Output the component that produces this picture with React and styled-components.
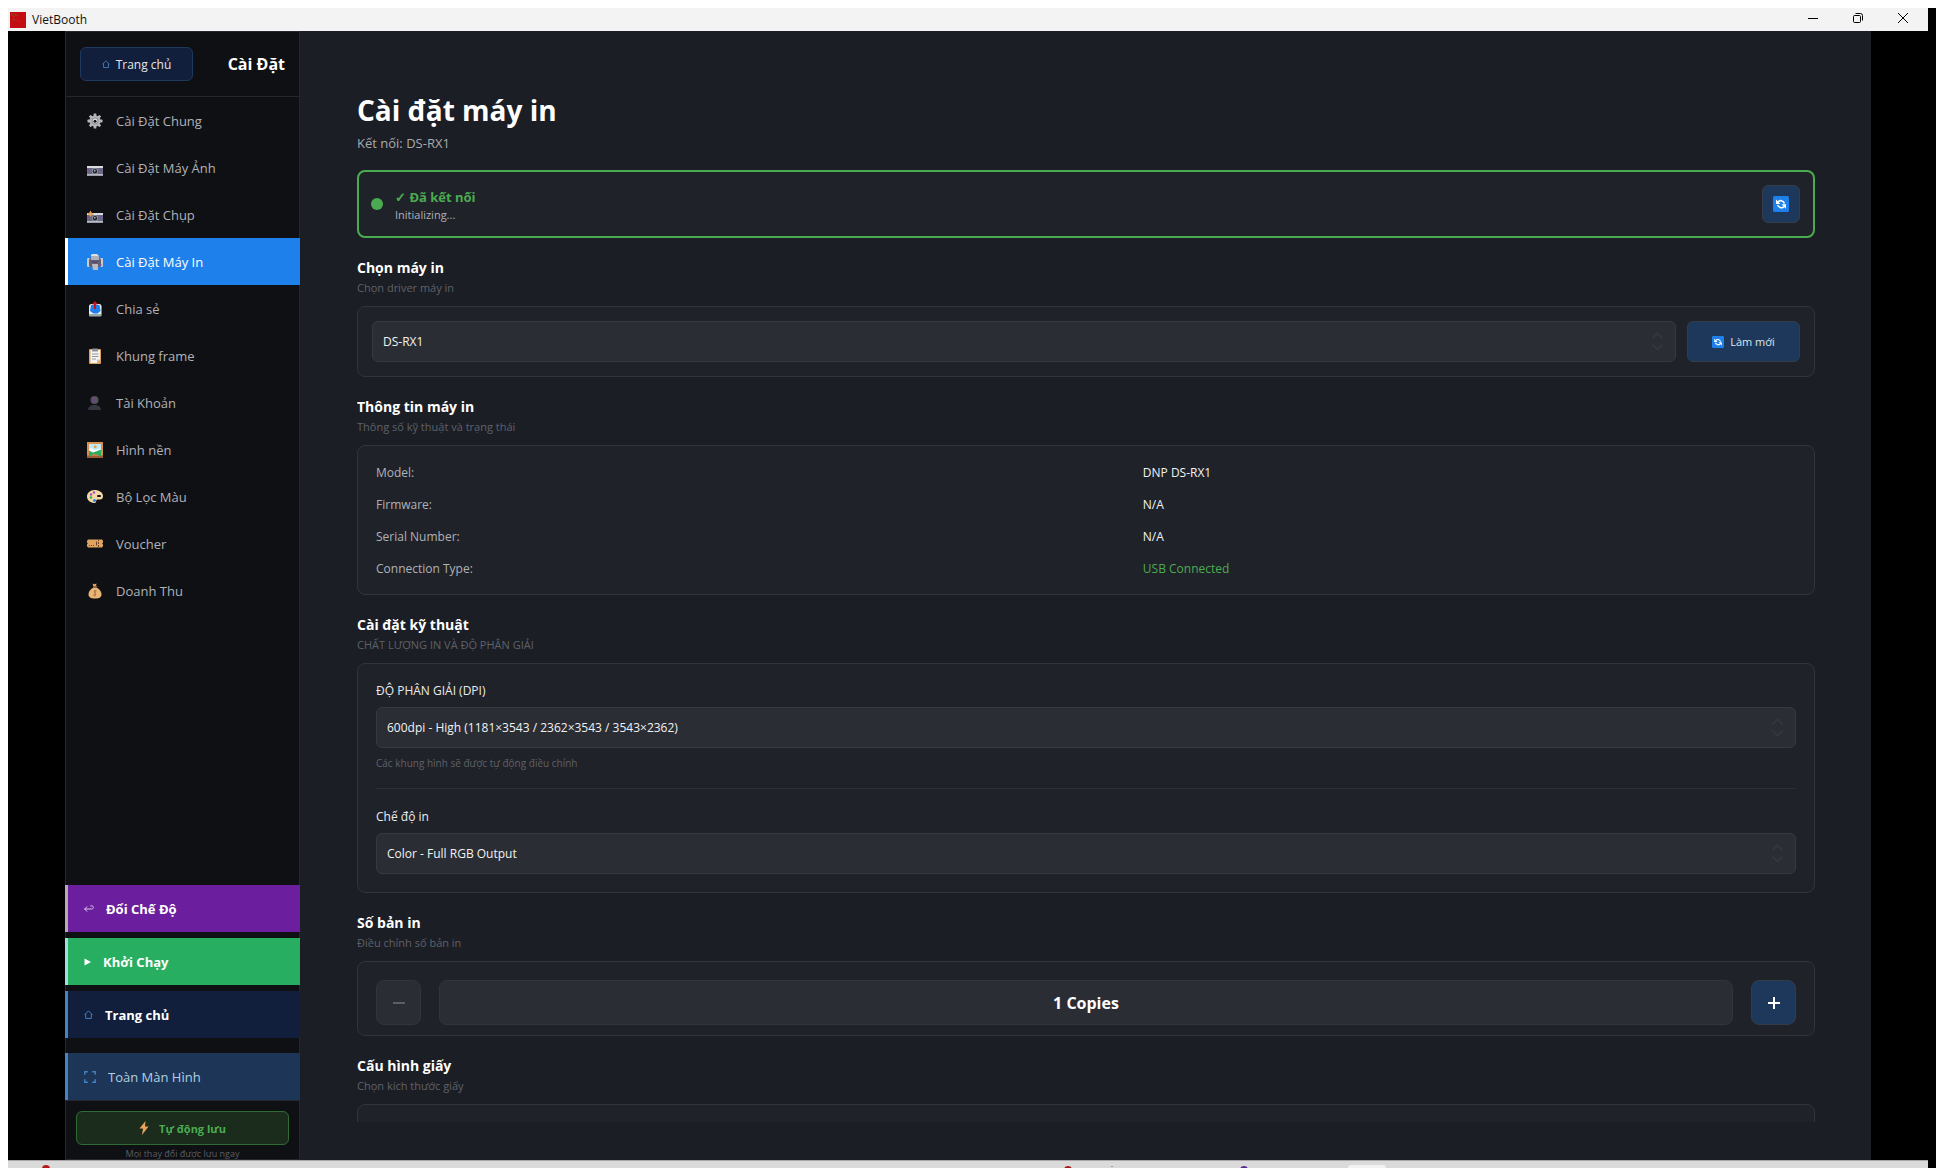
import React, { useState } from 'react';
import styled, { createGlobalStyle } from 'styled-components';

const GlobalStyle = createGlobalStyle`
  * {
    box-sizing: border-box;
  }
  body {
    margin: 0;
    background: #fff;
    color: #fff;
    font-family: 'Open Sans', 'Noto Sans', sans-serif;
    font-size: 12px;
    overflow: hidden;
  }
  button,
  select {
    font: inherit;
    margin: 0;
  }
  h1,
  h2,
  p,
  dl,
  dd {
    margin: 0;
  }
`;

/* ---------- window ---------- */

const Desktop = styled.div`
  display: grid;
  grid-template-columns: 8px 1fr 8px;
  height: 100vh;
  padding-top: 8px;
`;

const RightEdge = styled.div`
  grid-column: 3;
  background: #000;
`;

const Window = styled.div`
  grid-column: 2;
  display: flex;
  flex-direction: column;
  min-width: 0;
  min-height: 0;
`;

const TitleBar = styled.header`
  display: flex;
  align-items: center;
  flex: none;
  height: 23px;
  padding: 0 3px 0 2px;
  background: #f3f3f3;
  color: #111;
`;

const AppIcon = styled.svg`
  width: 16px;
  height: 16px;
  margin-right: 6px;
`;

const WindowButtons = styled.div`
  display: flex;
  height: 100%;
  margin-left: auto;
`;

const WindowButton = styled.button`
  display: flex;
  justify-content: center;
  width: 45px;
  height: 100%;
  padding: 4px 0 0;
  border: 0;
  background: none;

  svg {
    width: 12px;
    height: 12px;
    fill: none;
    stroke: #000;
  }
`;

const Stage = styled.div`
  display: flex;
  flex: 1;
  min-height: 0;
  padding: 0 57px;
  background: #000;
`;

const Taskbar = styled.footer`
  flex: none;
  height: 8px;
  border-top: 1px solid #aaa5aa;
  background: #dadada;
  overflow: hidden;

  svg {
    display: block;
    width: 100%;
    height: 7px;
  }
`;

/* ---------- sidebar ---------- */

const Sidebar = styled.aside`
  display: flex;
  flex-direction: column;
  flex: none;
  width: 235px;
  border: 1px solid #26272e;
  background: #0f1013;
`;

const SideHeader = styled.div`
  display: flex;
  align-items: center;
  justify-content: space-between;
  flex: none;
  height: 65px;
  padding: 0 14px;
  border-bottom: 1px solid #26272e;
`;

const HomeButton = styled.button`
  display: flex;
  align-items: center;
  justify-content: center;
  gap: 6px;
  width: 113px;
  height: 34px;
  border: 1px solid #1e3a5f;
  border-radius: 6px;
  background: #111f3d;
  color: #e6e6e6;
`;

const SideTitle = styled.span`
  font-size: 16px;
  font-weight: 700;
`;

/* coloured rows reach over the sidebar's side borders */
const SideNav = styled.nav`
  display: flex;
  flex-direction: column;
  margin: 0 -1px;
`;

const NavLink = styled.a`
  display: flex;
  align-items: center;
  gap: 13px;
  height: 47px;
  padding-left: 19px;
  border-left: 3px solid ${(props) => (props.$active ? '#fff' : 'transparent')};
  background: ${(props) => (props.$active ? '#1e80ea' : 'transparent')};
  background-clip: padding-box;
  color: ${(props) => (props.$active ? '#fff' : '#afb2b9')};
  font-size: 13px;
  text-decoration: none;

  svg {
    width: 16px;
    height: 16px;
  }
`;

const SideActions = styled.div`
  display: flex;
  flex-direction: column;
  flex: none;
  gap: 6px;
  margin: auto -1px 0;
`;

const actionColors = {
  mode: { bg: '#6b1f9e', edge: '#b4aab4' },
  run: { bg: '#28ae60', edge: '#9fdde0' },
  home: { bg: '#111f3d', edge: '#4483c4' },
  full: { bg: '#1d3557', edge: '#4483c4' },
};

const ActionButton = styled.button`
  display: flex;
  align-items: center;
  gap: 12px;
  height: 47px;
  padding: 0 16px;
  border: 0;
  border-left: 3px solid ${(props) => actionColors[props.$kind].edge};
  background: ${(props) => actionColors[props.$kind].bg};
  color: ${(props) => (props.$kind === 'full' ? '#b4cfe0' : '#fff')};
  font-size: 13px;
  font-weight: ${(props) => (props.$kind === 'full' ? 400 : 700)};
  margin-top: ${(props) => (props.$kind === 'full' ? '9px' : 0)};
`;

const AutoSave = styled.div`
  flex: none;
  height: 59px;
  padding: 10px 10px 0;
  border-top: 1px solid #26272e;
  text-align: center;
  overflow: hidden;
`;

const AutoSaveButton = styled.button`
  display: flex;
  align-items: center;
  justify-content: center;
  gap: 10px;
  width: 100%;
  height: 34px;
  border: 1px solid #2f6b33;
  border-radius: 6px;
  background: #1b2b1c;
  color: #4bab50;
  font-size: 11px;
  font-weight: 700;
`;

const AutoSaveNote = styled.p`
  margin-top: 2px;
  color: #5c5e66;
  font-size: 9px;
  line-height: 14px;
`;

/* ---------- main area ---------- */

const Main = styled.main`
  flex: 1;
  min-width: 0;
  padding: 57px 56px 38px 57px;
  background: #1b1e25;
`;

const ScrollArea = styled.div`
  height: 100%;
  overflow: hidden;
`;

const PageTitle = styled.h1`
  font-size: 28px;
  font-weight: 700;
  line-height: 44px;
`;

const PageSubtitle = styled.p`
  color: #a9aaaf;
  font-size: 13px;
  line-height: 22px;
`;

const Card = styled.div`
  padding: ${(props) => props.$pad || '18px'};
  border: 1px solid #31343c;
  border-radius: 8px;
  background: #202229;
`;

const StatusCard = styled.div`
  display: flex;
  align-items: center;
  gap: 12px;
  height: 68px;
  margin-top: 16px;
  padding: 0 13px 0 12px;
  border: 2px solid #4bab50;
  border-radius: 8px;
  background: #202229;
`;

const StatusDot = styled.span`
  width: 12px;
  height: 12px;
  border-radius: 50%;
  background: #4bab50;
`;

const StatusText = styled.div`
  flex: 1;
  padding-top: 4px;
`;

const StatusName = styled.p`
  color: #4bab50;
  font-size: 13px;
  font-weight: 700;
  line-height: 18px;
`;

const StatusNote = styled.p`
  color: #afb1b7;
  font-size: 11px;
  line-height: 18px;
`;

const BlueButton = styled.button`
  display: flex;
  align-items: center;
  justify-content: center;
  gap: 6px;
  flex: none;
  width: ${(props) => props.$w}px;
  height: ${(props) => props.$h}px;
  padding: 0;
  border: 1px solid #343c49;
  border-radius: 6px;
  background: #1e385c;
  color: #dce6ee;
  font-size: 11px;
`;

const Section = styled.section`
  padding-top: 18px;
`;

const SectionTitle = styled.h2`
  font-size: 14px;
  font-weight: 700;
  line-height: 24px;
`;

const SectionNote = styled.p`
  margin-bottom: 10px;
  color: #5f6168;
  font-size: 11px;
  line-height: 16px;
`;

const PickerRow = styled.div`
  display: flex;
  gap: 11px;
`;

const SelectBox = styled.div`
  position: relative;
  flex: 1;

  svg {
    position: absolute;
    top: 11px;
    right: 12px;
    width: 13px;
    height: 19px;
    fill: none;
    stroke: #34363e;
    stroke-width: 2;
    pointer-events: none;
  }
`;

const Select = styled.select`
  display: block;
  width: 100%;
  height: 41px;
  padding: 0 10px;
  border: 1px solid #373941;
  border-radius: 6px;
  background: #2b2d35;
  color: #f2f2f2;
  appearance: none;
`;

const InfoList = styled.dl`
  display: grid;
  grid-template-columns: 54% 1fr;
  row-gap: 14px;
  line-height: 18px;
`;

const InfoLabel = styled.dt`
  color: #afb1b7;
`;

const InfoValue = styled.dd`
  color: ${(props) => (props.$ok ? '#4bab50' : '#f2f2f2')};
`;

const FieldLabel = styled.label`
  display: block;
  margin-bottom: 7px;
  color: #eaebec;
  line-height: 18px;
`;

const FieldHint = styled.p`
  margin-top: 6px;
  color: #5f6168;
  font-size: 10px;
  line-height: 18px;
`;

const Divider = styled.hr`
  height: 1px;
  margin: 16px 0 19px;
  border: 0;
  background: #2c2e36;
`;

const CopiesRow = styled.div`
  display: flex;
  align-items: center;
  gap: 18px;
`;

const StepButton = styled.button`
  flex: none;
  width: 45px;
  height: 45px;
  padding: 4px 0 0;
  border: 1px solid ${(props) => (props.$blue ? '#343c49' : '#33353d')};
  border-radius: 8px;
  background: ${(props) => (props.$blue ? '#1e385c' : '#2b2d35')};
  color: ${(props) => (props.$blue ? '#fff' : '#5b5e64')};

  svg {
    width: 12px;
    height: 12px;
    fill: none;
    stroke: currentColor;
    stroke-width: 2;
  }
`;

const CopiesValue = styled.output`
  flex: 1;
  height: 45px;
  border: 1px solid #33353d;
  border-radius: 8px;
  background: #2b2d35;
  font-size: 16px;
  font-weight: 700;
  line-height: 44px;
  text-align: center;
`;

/* ---------- icons ---------- */

const Icon = ({ size = 16, children }) => (
  <svg viewBox="0 0 16 16" width={size} height={size} aria-hidden="true">
    {children}
  </svg>
);

const GearIcon = () => (
  <Icon>
    <g fill="#b4b5b8">
      <circle cx="8" cy="8" r="5.5" />
      {[0, 45, 90, 135].map((a) => (
        <rect key={a} x="6.6" y="0.5" width="2.8" height="15" rx="0.6" transform={`rotate(${a} 8 8)`} />
      ))}
    </g>
    <circle cx="8" cy="8" r="3.4" fill="#8d8f94" />
    <circle cx="8" cy="8" r="2.4" fill="#dfe3e6" />
    <circle cx="8" cy="8.2" r="1.5" fill="#121316" />
  </Icon>
);

const CameraIcon = ({ flash }) => (
  <Icon>
    <rect x="0" y="6" width="16" height="10" rx="0.6" fill="#696b82" />
    <rect x="0" y="6" width="16" height="2" fill="#dadbe0" />
    <rect x="0" y="14" width="16" height="1.6" fill="#b9bbc4" />
    <rect x="1" y="9" width="2" height="2" fill="#7d50a8" />
    <rect x="13" y="9" width="2" height="2" fill="#7d50a8" />
    <circle cx="8" cy="11.2" r="3" fill="#9a9ca8" />
    <circle cx="8" cy="11.2" r="2.2" fill="#22242c" />
    <rect x="7" y="10" width="1.5" height="1.5" fill="#9db7c4" />
    {flash && <path d="M3.5 3.5l1.2 2.3L7 7 4.7 8.2 3.5 10 2.3 8.2 0 7l2.3-1.2z" fill="#e8a35a" />}
  </Icon>
);

const PrinterIcon = () => (
  <Icon>
    <path d="M5 0h5l2 2v5H4V1z" fill="#dcdfe3" />
    <rect x="0" y="4" width="3" height="9" rx="1.2" fill="#c9ced6" />
    <rect x="13" y="4" width="3" height="9" rx="1.2" fill="#c9ced6" />
    <rect x="2" y="4.5" width="12" height="8.5" rx="1.5" fill="#62636f" />
    <rect x="4" y="2" width="8" height="4" fill="#aeb2b8" />
    <path d="M5 7l2 1.2h2L11 7" stroke="#5b3a83" strokeWidth="1.3" fill="none" />
    <path d="M5 10h6v6H6z" fill="#b9bdc3" />
    <rect x="13" y="10" width="1.5" height="1.5" fill="#8a3fc0" />
  </Icon>
);

const ShareIcon = () => (
  <Icon>
    <rect x="2" y="3" width="12.5" height="12" rx="2.5" fill="#e6edf1" />
    <rect x="2" y="13" width="12.5" height="2.5" rx="0.8" fill="#9aa9ae" />
    <path d="M4 4h8.5l1 6-3 2.5h-4L3 10z" fill="#1e80ea" />
    <path d="M8 0l3 3.5H9V8H7V3.5H5z" fill="#c4161c" />
  </Icon>
);

const ClipboardIcon = () => (
  <Icon>
    <rect x="2" y="1" width="12" height="15" rx="1" fill="#dc9f5e" />
    <path d="M3.5 2H13v9.5L10 15H3.5z" fill="#f4f3f1" />
    <path d="M10 15v-3.5h3z" fill="#c9c6c2" />
    <rect x="5" y="0.5" width="6" height="3" rx="0.5" fill="#8c9498" />
    <path d="M5 6h6.5M5 8.5h6.5M5 11h4" stroke="#8f999e" />
  </Icon>
);

const UserIcon = () => (
  <Icon>
    <circle cx="7.5" cy="5" r="4" fill="#55525b" />
    <path d="M1 15c0-3 2.5-5 6.5-5s6.5 2 6.5 5z" fill="#343642" />
    <path d="M6 3h3v1.5H6zM7 5.5h2V7H7z" fill="#71419c" />
  </Icon>
);

const PictureIcon = () => (
  <Icon>
    <rect x="0" y="0" width="16" height="16" fill="#d98f4e" />
    <rect x="0" y="13.5" width="16" height="2.5" fill="#9c5c35" />
    <rect x="2" y="2" width="12" height="12" fill="#bfe9f7" />
    <path d="M2 7c3-2 4 1 6 1s3-2 6-1v4H2z" fill="#fbfdfe" />
    <path d="M2 8.5l4 2 3-1 5-2V14H2z" fill="#28ae60" />
    <path d="M4 14c1-3 6-3 8 0z" fill="#c08348" />
    <circle cx="8.2" cy="4.8" r="1.5" fill="#e8a35a" />
  </Icon>
);

const PaletteIcon = () => (
  <Icon>
    <path
      d="M7.5 1C3 1 0 4 0 7.5c0 3.500 3 6 7 6.500 2.500.3 2-2 2.500-3 .5-.8 2-.5 3.500-.5 2 0 3-1.500 3-3.500C16 3.500 12 1 7.500 1z"
      fill="#f5d7a3"
    />
    <rect x="10" y="6" width="4" height="2" rx="1" fill="#121316" />
    <circle cx="7" cy="3.5" r="1.2" fill="#9b4fc8" />
    <circle cx="4" cy="5.5" r="1.2" fill="#9b4fc8" />
    <circle cx="4" cy="8.5" r="1.2" fill="#28ae60" />
    <circle cx="7.5" cy="11.5" r="1.5" fill="#1e80ea" />
  </Icon>
);

const TicketIcon = () => (
  <Icon>
    <path d="M1 3.5h14l1 1.5v1.5l-.8 1 .8 1V10l-1 1.5H1L0 10V8.5l.8-1L0 6.5V5z" fill="#e2a55f" />
    <path d="M11.5 3v9" stroke="#6e4526" strokeDasharray="2 1" />
    <path d="M2 9.5h6" stroke="#6e4526" strokeDasharray="1 1" />
    <path d="M9.5 5.5v4" stroke="#6e4526" />
  </Icon>
);

const MoneyIcon = () => (
  <Icon>
    <path d="M5.5.5l2 .8 2-.8L9 3.5H6.5z" fill="#e2a55f" />
    <rect x="6" y="3" width="4" height="1.3" fill="#9c5c35" />
    <path d="M6.5 4.5h3c3 1.5 5 4 5 7 0 2.5-2 4-6.5 4s-6.5-1.5-6.5-4c0-3 2-5.5 5-7z" fill="#e9b676" />
    <path d="M9.5 8c-2-1-3 1-1.500 2s.5 3-1.800 2M8 7v6.500" stroke="#a9713c" fill="none" />
  </Icon>
);

const HouseIcon = ({ size }) => (
  <Icon size={size}>
    <path d="M1 8.5l7-7 7 7M3 7v8h10V7" fill="none" stroke="#4483c4" strokeWidth="1.7" />
  </Icon>
);

const ReturnIcon = () => (
  <Icon size={10}>
    <path d="M5 4L1 8l4 4M1 8h11c4 0 4-5 0-5h-2" fill="none" stroke="#e2d2ee" strokeWidth="1.5" />
  </Icon>
);

const PlayIcon = () => (
  <svg viewBox="0 0 7 8" width="7" height="8" aria-hidden="true">
    <path d="M.5.5L7 4 .5 7.5z" fill="#fff" />
  </svg>
);

const ExpandIcon = () => (
  <Icon size={12}>
    <path d="M1 5V1h4M11 1h4v4M15 11v4h-4M5 15H1v-4" fill="none" stroke="#4483c4" strokeWidth="1.8" />
  </Icon>
);

const BoltIcon = () => (
  <svg viewBox="0 0 10 14" width="10" height="14" aria-hidden="true">
    <path d="M6.5 0l-6 7.5H4L3 14l6.5-8.5H6z" fill="#e8a35a" />
  </svg>
);

const RefreshIcon = ({ size }) => (
  <Icon size={size}>
    <rect width="16" height="16" rx="1.5" fill="#1e80ea" />
    <path d="M5 6c1.5-2 5-2 6.5 1.5M11 10.5C9.5 12.500 6 12 4.500 9" fill="none" stroke="#fff" strokeWidth="1.6" />
    <path d="M3 3.5V8h4.500zM13 12.800V8.300H8.500z" fill="#fff" />
  </Icon>
);

const Chevrons = () => (
  <svg viewBox="0 0 13 19" aria-hidden="true">
    <path d="M1.5 6.5l5-5 5 5M1.5 12.5l5 5 5-5" />
  </svg>
);

/* ---------- data ---------- */

const navItems = [
  { key: 'general', text: 'Cài Đặt Chung', icon: <GearIcon /> },
  { key: 'camera', text: 'Cài Đặt Máy Ảnh', icon: <CameraIcon /> },
  { key: 'capture', text: 'Cài Đặt Chụp', icon: <CameraIcon flash /> },
  { key: 'printer', text: 'Cài Đặt Máy In', icon: <PrinterIcon /> },
  { key: 'share', text: 'Chia sẻ', icon: <ShareIcon /> },
  { key: 'frame', text: 'Khung frame', icon: <ClipboardIcon /> },
  { key: 'account', text: 'Tài Khoản', icon: <UserIcon /> },
  { key: 'background', text: 'Hình nền', icon: <PictureIcon /> },
  { key: 'filter', text: 'Bộ Lọc Màu', icon: <PaletteIcon /> },
  { key: 'voucher', text: 'Voucher', icon: <TicketIcon /> },
  { key: 'revenue', text: 'Doanh Thu', icon: <MoneyIcon /> },
];

const printerInfo = [
  { label: 'Model:', value: 'DNP DS-RX1' },
  { label: 'Firmware:', value: 'N/A' },
  { label: 'Serial Number:', value: 'N/A' },
  { label: 'Connection Type:', value: 'USB Connected', ok: true },
];

const Dropdown = ({ id, label, option }) => (
  <SelectBox>
    <Select id={id} aria-label={label}>
      <option>{option}</option>
    </Select>
    <Chevrons />
  </SelectBox>
);

const Block = ({ title, note, children }) => (
  <Section>
    <SectionTitle>{title}</SectionTitle>
    <SectionNote>{note}</SectionNote>
    {children}
  </Section>
);

export default function App() {
  const [page, setPage] = useState('printer');
  const [copies, setCopies] = useState(1);

  return (
    <Desktop>
      <GlobalStyle />
      <Window>
        <TitleBar>
          <AppIcon viewBox="0 0 16 16" aria-hidden="true">
            <rect width="16" height="16" fill="#c40d12" />
            <path d="M1 1l3 4M4 2l3 2M3 7l2 1M7 8h1M9 9h1" stroke="#7d5a20" />
          </AppIcon>
          VietBooth
          <WindowButtons>
            <WindowButton aria-label="Minimize">
              <svg viewBox="0 0 12 12"><path d="M1 6.5h10" /></svg>
            </WindowButton>
            <WindowButton aria-label="Restore">
              <svg viewBox="0 0 12 12">
                <rect x="1.5" y="3.5" width="7" height="7" rx="1" />
                <path d="M3.5 1.5h5a2 2 0 0 1 2 2v5" />
              </svg>
            </WindowButton>
            <WindowButton aria-label="Close">
              <svg viewBox="0 0 12 12"><path d="M1 1l10 10M11 1L1 11" /></svg>
            </WindowButton>
          </WindowButtons>
        </TitleBar>

        <Stage>
          <Sidebar>
            <SideHeader>
              <HomeButton>
                <HouseIcon size={8} />
                Trang chủ
              </HomeButton>
              <SideTitle>Cài Đặt</SideTitle>
            </SideHeader>
            <SideNav>
              {navItems.map((item) => (
                <NavLink
                  key={item.key}
                  href={`#${item.key}`}
                  $active={item.key === page}
                  onClick={() => setPage(item.key)}
                >
                  {item.icon}
                  {item.text}
                </NavLink>
              ))}
            </SideNav>
            <SideActions>
              <ActionButton $kind="mode"><ReturnIcon />Đổi Chế Độ</ActionButton>
              <ActionButton $kind="run"><PlayIcon />Khởi Chạy</ActionButton>
              <ActionButton $kind="home"><HouseIcon size={9} />Trang chủ</ActionButton>
              <ActionButton $kind="full"><ExpandIcon />Toàn Màn Hình</ActionButton>
            </SideActions>
            <AutoSave>
              <AutoSaveButton><BoltIcon />Tự động lưu</AutoSaveButton>
              <AutoSaveNote>Mọi thay đổi được lưu ngay</AutoSaveNote>
            </AutoSave>
          </Sidebar>

          <Main>
            <ScrollArea>
              <PageTitle>Cài đặt máy in</PageTitle>
              <PageSubtitle>Kết nối: DS-RX1</PageSubtitle>

              <StatusCard>
                <StatusDot />
                <StatusText>
                  <StatusName>✓ Đã kết nối</StatusName>
                  <StatusNote>Initializing...</StatusNote>
                </StatusText>
                <BlueButton $w={38} $h={38} aria-label="Làm mới">
                  <RefreshIcon size={16} />
                </BlueButton>
              </StatusCard>

              <Block title="Chọn máy in" note="Chọn driver máy in">
                <Card $pad="14px">
                  <PickerRow>
                    <Dropdown id="driver" label="Chọn driver máy in" option="DS-RX1" />
                    <BlueButton $w={113} $h={41}>
                      <RefreshIcon size={12} />
                      Làm mới
                    </BlueButton>
                  </PickerRow>
                </Card>
              </Block>

              <Block title="Thông tin máy in" note="Thông số kỹ thuật và trạng thái">
                <Card $pad="18px 18px 16px">
                  <InfoList>
                    {printerInfo.map((row) => (
                      <React.Fragment key={row.label}>
                        <InfoLabel>{row.label}</InfoLabel>
                        <InfoValue $ok={row.ok}>{row.value}</InfoValue>
                      </React.Fragment>
                    ))}
                  </InfoList>
                </Card>
              </Block>

              <Block title="Cài đặt kỹ thuật" note="CHẤT LƯỢNG IN VÀ ĐỘ PHÂN GIẢI">
                <Card>
                  <FieldLabel htmlFor="dpi">ĐỘ PHÂN GIẢI (DPI)</FieldLabel>
                  <Dropdown id="dpi" option="600dpi - High (1181×3543 / 2362×3543 / 3543×2362)" />
                  <FieldHint>Các khung hình sẽ được tự động điều chỉnh</FieldHint>
                  <Divider />
                  <FieldLabel htmlFor="mode">Chế độ in</FieldLabel>
                  <Dropdown id="mode" option="Color - Full RGB Output" />
                </Card>
              </Block>

              <Block title="Số bản in" note="Điều chỉnh số bản in">
                <Card $pad="18px 18px 10px">
                  <CopiesRow>
                    <StepButton aria-label="Giảm" onClick={() => setCopies(Math.max(1, copies - 1))}>
                      <svg viewBox="0 0 12 12"><path d="M0 6h12" /></svg>
                    </StepButton>
                    <CopiesValue>{copies} Copies</CopiesValue>
                    <StepButton $blue aria-label="Tăng" onClick={() => setCopies(copies + 1)}>
                      <svg viewBox="0 0 12 12"><path d="M0 6h12M6 0v12" /></svg>
                    </StepButton>
                  </CopiesRow>
                </Card>
              </Block>

              <Block title="Cấu hình giấy" note="Chọn kích thước giấy">
                <Card />
              </Block>
            </ScrollArea>
          </Main>
        </Stage>

        <Taskbar>
          <svg aria-hidden="true">
            <circle cx="38" cy="8" r="4" fill="#b51a1a" />
            <circle cx="1060" cy="9" r="4" fill="#a81616" />
            <rect x="1103" y="5" width="2" height="1" fill="#a0a0a0" />
            <circle cx="1236" cy="9" r="4" fill="#5b2a90" />
            <rect x="1340" y="4" width="38" height="10" rx="3" fill="#f2f2f2" />
          </svg>
        </Taskbar>
      </Window>
      <RightEdge />
    </Desktop>
  );
}
